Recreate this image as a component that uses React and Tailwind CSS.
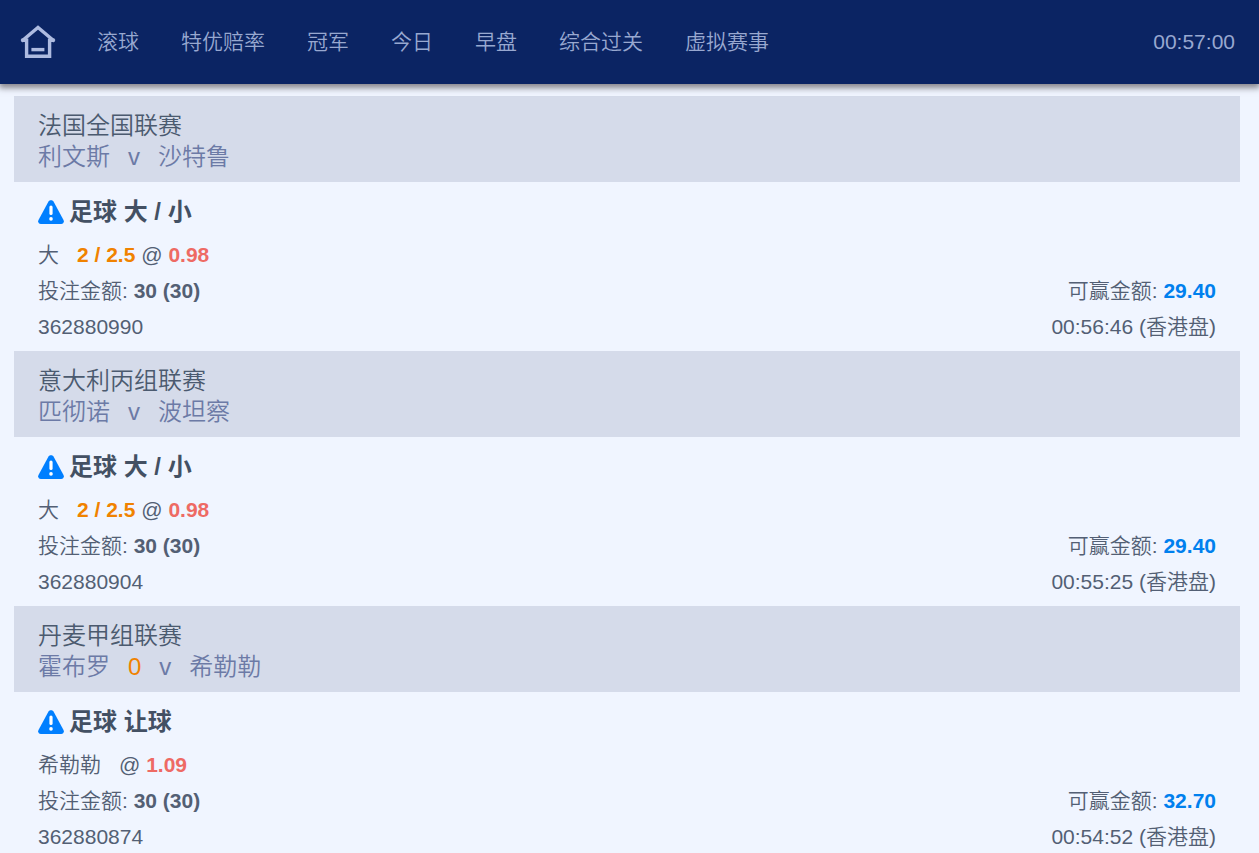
const NAV = ['滚球', '特优赔率', '冠军', '今日', '早盘', '综合过关', '虚拟赛事'];

const BETS = [
  {
    id: '362880990',
    league: '法国全国联赛',
    home: '利文斯',
    away: '沙特鲁',
    market: '足球 大 / 小',
    pick: '大',
    line: '2 / 2.5',
    odds: '0.98',
    win: '29.40',
    time: '00:56:46',
  },
  {
    id: '362880904',
    league: '意大利丙组联赛',
    home: '匹彻诺',
    away: '波坦察',
    market: '足球 大 / 小',
    pick: '大',
    line: '2 / 2.5',
    odds: '0.98',
    win: '29.40',
    time: '00:55:25',
  },
  {
    id: '362880874',
    league: '丹麦甲组联赛',
    home: '霍布罗',
    handicap: '0',
    away: '希勒勒',
    market: '足球 让球',
    pick: '希勒勒',
    odds: '1.09',
    win: '32.70',
    time: '00:54:52',
  },
];

function HomeIcon() {
  return (
    <svg viewBox="0 0 36 34" className="h-[34px] w-9" fill="none" stroke="currentColor" strokeWidth="3.4" aria-hidden="true">
      <path d="M1.6 16.2 18 2.4l16.4 13.8" />
      <path d="M1.4 15.2H6.6V31.2H29.6V15.2H34.6" />
      <path d="M11.4 24.6H24.4" />
    </svg>
  );
}

function WarningIcon() {
  return (
    <svg viewBox="0 0 26 24" className="h-6 w-[26px] shrink-0" aria-hidden="true">
      <path
        d="M10.5 1.6C11.6-.3 14.4-.3 15.5 1.6L25.5 19.9C26.5 21.8 25.3 24 23.2 24H2.8C.7 24-.5 21.8.5 19.9Z"
        fill="#007fff"
      />
      <path d="M13 7V13.4" stroke="#fff" strokeWidth="3.2" strokeLinecap="round" />
      <circle cx="13" cy="18.9" r="1.8" fill="#fff" />
    </svg>
  );
}

function Bet({ bet }) {
  return (
    <article>
      <header className="bg-[#d5dbea] px-6 pt-[14px] pb-[10px] text-2xl leading-[31px]">
        <h2 className="font-[350] text-[#4b5a6f]">{bet.league}</h2>
        <p className="flex gap-[18px] text-[#6c7aa6]">
          <span>{bet.home}</span>
          {bet.handicap && <span className="text-[#f08200]">{bet.handicap}</span>}
          <span>v</span>
          <span>{bet.away}</span>
        </p>
      </header>
      <div className="px-6 pt-3 pb-[6px] leading-9">
        <h3 className="mb-[7px] flex items-center gap-[5px] text-2xl leading-9 font-bold text-[#435063]">
          <WarningIcon />
          {bet.market}
        </h3>
        <p className="flex gap-[18px]">
          <span>{bet.pick}</span>
          <span>
            {bet.line && <b className="font-bold text-[#f08200]">{bet.line} </b>}@{' '}
            <b className="font-bold text-[#ee6a64]">{bet.odds}</b>
          </span>
        </p>
        <div className="flex justify-between">
          <p>
            投注金额: <b className="font-bold">30 (30)</b>
          </p>
          <p>
            可赢金额: <b className="font-bold text-[#0080ee]">{bet.win}</b>
          </p>
        </div>
        <div className="flex justify-between">
          <p>{bet.id}</p>
          <p>{bet.time} (香港盘)</p>
        </div>
      </div>
    </article>
  );
}

export default function App() {
  return (
    <div className="min-h-screen bg-[#f0f5ff] font-['Liberation_Sans','Noto_Sans_CJK_SC',sans-serif] text-[21px] font-[350] text-[#535f74]">
      <header className="sticky top-0 z-10 flex h-21 items-center bg-[#0b2463] pr-6 pl-5 text-[#98a8d0] shadow-[0_3px_6px_1px_rgba(80,75,80,0.65)]">
        <a href="#home" aria-label="首页" className="text-[#aebbe0]">
          <HomeIcon />
        </a>
        <nav className="ml-[41px] flex flex-1 gap-[42px]">
          {NAV.map((item) => (
            <a key={item} href="#bets">
              {item}
            </a>
          ))}
        </nav>
        <time>00:57:00</time>
      </header>
      <main className="mt-3 mr-[19px] ml-[14px]">
        {BETS.map((bet) => (
          <Bet key={bet.id} bet={bet} />
        ))}
      </main>
    </div>
  );
}
